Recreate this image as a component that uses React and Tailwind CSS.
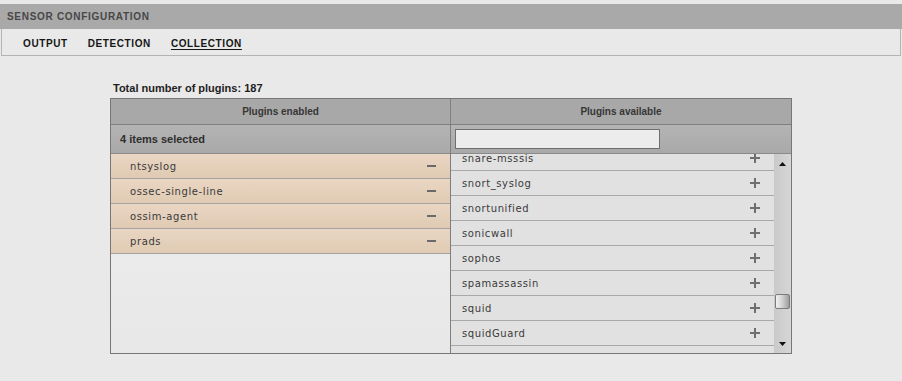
import React from "react";

const enabled = ["ntsyslog", "ossec-single-line", "ossim-agent", "prads"];
const available = [
  "snare-msssis",
  "snort_syslog",
  "snortunified",
  "sonicwall",
  "sophos",
  "spamassassin",
  "squid",
  "squidGuard",
  "ssh",
];

function Minus() {
  return <span className="block w-[9px] h-[2px] bg-[#6a6a6a]" />;
}

function Plus() {
  return (
    <svg width="10" height="10" viewBox="0 0 10 10" className="block">
      <rect x="4" y="0" width="2" height="10" fill="#6f6f6f" />
      <rect x="0" y="4" width="10" height="2" fill="#6f6f6f" />
    </svg>
  );
}

export default function App() {
  const bold = { fontFamily: '"Liberation Sans", Arial, sans-serif' };
  const list = { fontFamily: '"DejaVu Sans", Verdana, sans-serif' };

  return (
    <div className="min-h-screen w-[902px] bg-[#e9e9e9] pt-[4px]" style={bold}>
      {/* HEADER */}
      <div className="h-[25px] bg-[#a9a9a9] flex items-center pl-[7px]">
        <span className="text-[10px] font-bold tracking-[0.7px] text-[#474747]">
          SENSOR CONFIGURATION
        </span>
      </div>

      {/* TABS */}
      <div className="h-[27px] border-l border-r border-b border-[#b4b4b4] mx-[1px] flex items-center pt-[2px] pl-[21px] gap-[20px] text-[10px] font-bold tracking-[0.6px] text-[#161616]">
        <span>OUTPUT</span>
        <span>DETECTION</span>
        <span className="underline underline-offset-2">COLLECTION</span>
      </div>

      {/* CONTENT */}
      <div className="pl-[110px] pt-[26px]">
        <div className="ml-[3px] mb-[3px] text-[11px] leading-[13px] font-bold text-[#1e1e1e]">
          Total number of plugins: 187
        </div>

        <div className="w-[682px] border border-[#777] flex">
          {/* ENABLED */}
          <div className="w-[339px] flex flex-col">
            <div className="h-[26px] border-b border-[#7f7f7f] bg-[#a8a8a8] flex items-center justify-center text-[10px] font-bold text-[#363636]">
              Plugins enabled
            </div>
            <div className="h-[29px] border-b border-[#8a8a8a] bg-gradient-to-b from-[#b4b4b4] to-[#a9a9a9] flex items-center pl-[9px] text-[11px] font-bold text-[#2e2e2e]">
              4 items selected
            </div>
            <div className="h-[199px] bg-gradient-to-b from-[#ededed] to-[#e8e8e8]" style={list}>
              {enabled.map((name) => (
                <div
                  key={name}
                  className="h-[25px] border-b border-[#a3a3a3] bg-gradient-to-b from-[#e9d6c3] to-[#e0cab3] flex items-center justify-between pl-[19px] pr-[14px] text-[10px] tracking-[0.6px] text-[#3a3a3a]"
                >
                  <span>{name}</span>
                  <Minus />
                </div>
              ))}
            </div>
          </div>

          {/* AVAILABLE */}
          <div className="flex-1 border-l border-[#7f7f7f] flex flex-col">
            <div className="h-[26px] border-b border-[#7f7f7f] bg-[#a8a8a8] flex items-center justify-center text-[10px] font-bold text-[#363636]">
              Plugins available
            </div>
            <div className="h-[29px] border-b border-[#8a8a8a] bg-gradient-to-b from-[#b4b4b4] to-[#a9a9a9] flex items-center pl-[4px]">
              <input
                type="text"
                className="w-[205px] h-[20px] border border-[#6f6f6f] bg-[#ececec] outline-none"
              />
            </div>
            <div className="h-[199px] flex">
              <div className="w-[323px] h-[199px] overflow-hidden bg-[#e6e6e6]" style={list}>
                <div className="-mt-[8px]">
                  {available.map((name) => (
                    <div
                      key={name}
                      className="h-[25px] border-b border-[#a8a8a8] bg-[#e1e1e1] flex items-center justify-between pl-[11px] pr-[14px] text-[10px] tracking-[0.6px] text-[#3a3a3a]"
                    >
                      <span>{name}</span>
                      <Plus />
                    </div>
                  ))}
                </div>
              </div>

              {/* SCROLLBAR */}
              <div className="flex-1 bg-gradient-to-r from-[#c9c9c9] to-[#d6d6d6] flex flex-col items-center relative">
                <svg width="7" height="4" viewBox="0 0 7 4" className="mt-[8px]">
                  <path d="M3.5 0 L7 4 L0 4 Z" fill="#111" />
                </svg>
                <div className="absolute top-[140px] left-[1px] w-[15px] h-[15px] border border-[#7b7b7b] rounded-[2px] bg-gradient-to-r from-[#f2f2f2] via-[#cfcfcf] to-[#9e9e9e]" />
                <svg width="7" height="4" viewBox="0 0 7 4" className="mt-auto mb-[7px]">
                  <path d="M0 0 L7 0 L3.5 4 Z" fill="#111" />
                </svg>
              </div>
            </div>
          </div>
        </div>
      </div>
    </div>
  );
}
